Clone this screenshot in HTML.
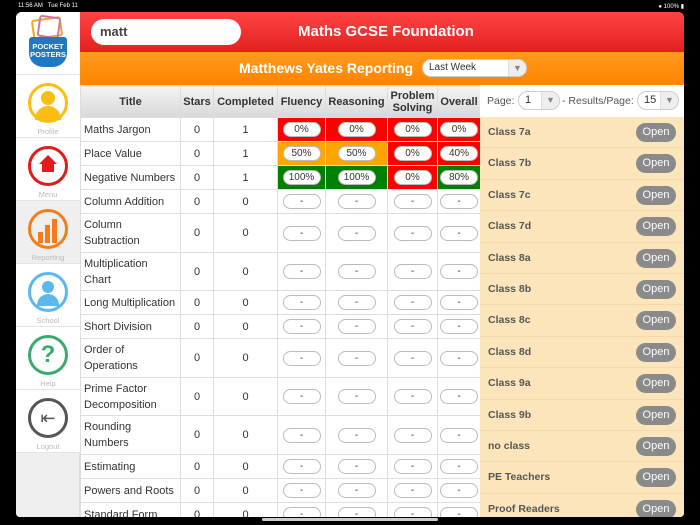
<!DOCTYPE html>
<html><head><style>
*{box-sizing:border-box;margin:0;padding:0}
body{width:700px;height:525px;background:#000;font-family:"Liberation Sans",sans-serif;position:relative;overflow:hidden}
.abs{position:absolute}
.status{color:#fff;font-size:6px;top:3px}
#app{left:16px;top:12px;width:668px;height:505px;background:#fff;border-radius:6px 6px 4px 4px;overflow:hidden}
#side{left:0;top:0;width:64px;height:505px;background:#efefef;border-right:1px solid #ddd}
.nav{position:absolute;left:0;width:64px;height:63px;background:#fff;border-bottom:1px solid #e4e4e4;text-align:center;font-size:7.5px;color:#bbb}
.nav .ic{position:absolute;left:12px;top:8px;width:40px;height:40px;border-radius:50%;border:3px solid}
.nav span{position:absolute;left:0;right:0;top:52px}
#red{left:64px;top:0;width:604px;height:40px;background:linear-gradient(#f44,#e42020)}
#org{left:64px;top:40px;width:604px;height:33px;background:linear-gradient(#ff9a1e,#ff8400)}
table{border-collapse:collapse;position:absolute;left:64px;top:73px;font-size:11px;color:#333}
td,th{border:1px solid #ddd;text-align:center;padding:0}
th{background:linear-gradient(#f4f4f4,#d8d8d8);height:32px;font-size:11px;color:#333;line-height:12px}
td.t{text-align:left;padding-left:3px;line-height:16px}
.p{display:inline-block;width:38px;height:15px;border-radius:8px;background:#fff;border:1px solid #bbb;font-size:10px;line-height:13px;color:#333}
.R{background:#f00}.O{background:#ffa500}.G{background:#008000}
#right{left:464px;top:73px;width:204px;height:432px;background:#fde5bb}
.cl{position:absolute;left:0;width:204px;height:31.4px;border-bottom:1px solid #f4d9aa;font-size:10.5px;font-weight:bold;color:#555;padding-left:8px;line-height:31px}
.cl b{position:absolute;right:8px;top:6px;width:40px;height:19px;border-radius:10px;background:#8a8a8a;color:#fff;font-weight:normal;text-align:center;line-height:19px;font-size:11px}
.sel{position:absolute;height:19px;border-radius:10px;background:#fff;border:1px solid #ccc;font-size:11px;color:#333;line-height:17px;padding-left:6px}
.sel i{position:absolute;right:0;top:0;width:18px;height:17px;border-left:1px solid #ddd;color:#888;font-style:normal;font-size:9px;text-align:center;border-radius:0 10px 10px 0;background:#eee}
</style></head><body>
<div class="abs status" style="left:18px">11:56 AM&nbsp;&nbsp; Tue Feb 11</div>
<div class="abs status" style="right:16px">&#9679; 100% ▮</div>
<div id="app" class="abs">
<div id="side" class="abs">
 <div class="nav" style="top:0">
  <div class="abs" style="left:16px;top:6px;width:30px;height:20px;border:2px solid #f5a623;border-radius:3px;transform:rotate(-8deg)"></div>
  <div class="abs" style="left:22px;top:4px;width:22px;height:22px;border:2px solid #c7a;border-radius:3px;transform:rotate(8deg)"></div>
  <div class="abs" style="left:13px;top:25px;width:38px;height:30px;background:#1e78c2;border-radius:3px 3px 14px 14px;color:#fff;font-weight:bold;font-size:7.5px;line-height:8px;padding-top:6px">POCKET<br>POSTERS</div>
 </div>
 <div class="nav" style="top:63px"><div class="ic" style="border-color:#fbbd12"><div class="abs" style="left:10px;top:5px;width:14px;height:14px;border-radius:50%;background:#fbbd12"></div><div class="abs" style="left:4px;top:20px;width:26px;height:14px;border-radius:13px 13px 0 0;background:#fbbd12"></div></div><span>Profile</span></div>
 <div class="nav" style="top:126px"><div class="ic" style="border-color:#e21a1a"><div class="abs" style="left:8px;top:6px;width:0;height:0;border-left:9px solid transparent;border-right:9px solid transparent;border-bottom:9px solid #e21a1a"></div><div class="abs" style="left:11px;top:14px;width:12px;height:9px;background:#e21a1a"></div></div><span>Menu</span></div>
 <div class="nav" style="top:189px;background:#efefef"><div class="ic" style="border-color:#f47d1b"><div class="abs" style="left:7px;top:20px;width:5px;height:11px;background:#f47d1b"></div><div class="abs" style="left:14px;top:13px;width:5px;height:18px;background:#f47d1b"></div><div class="abs" style="left:21px;top:7px;width:5px;height:24px;background:#f47d1b"></div></div><span>Reporting</span></div>
 <div class="nav" style="top:252px"><div class="ic" style="border-color:#5bb8ea"><div class="abs" style="left:11px;top:6px;width:12px;height:12px;border-radius:50%;background:#5bb8ea"></div><div class="abs" style="left:6px;top:19px;width:22px;height:12px;border-radius:11px 11px 0 0;background:#5bb8ea"></div></div><span>School</span></div>
 <div class="nav" style="top:315px"><div class="ic" style="border-color:#3aaa6e;color:#3aaa6e;font-weight:bold;font-size:24px;line-height:34px">?</div><span>Help</span></div>
 <div class="nav" style="top:378px"><div class="ic" style="border-color:#555;color:#555;font-size:18px;line-height:34px">&#8676;</div><span>Logout</span></div>
</div>
<div id="red" class="abs"><div class="abs" style="left:11px;top:7px;width:150px;height:26px;background:#fff;border-radius:13px;font-size:13px;font-weight:bold;color:#444;padding-left:9px;line-height:26px">matt</div>
<div class="abs" style="left:218px;top:11px;color:#fff;font-weight:bold;font-size:15px">Maths GCSE Foundation</div></div>
<div id="org" class="abs"><div class="abs" style="left:159px;top:8px;color:#fff;font-weight:bold;font-size:14px">Matthews Yates Reporting</div>
<div class="sel" style="left:342px;top:7px;width:105px;height:18px;font-size:10px;line-height:16px">Last Week<i style="height:16px">▼</i></div></div>
<table>
<tr><th style="width:100px">Title</th><th style="width:33px">Stars</th><th style="width:64px">Completed</th><th style="width:48px">Fluency</th><th style="width:62px">Reasoning</th><th style="width:50px">Problem<br>Solving</th><th style="width:43px">Overall</th></tr>
<tr style="height:24px"><td class="t">Maths Jargon</td><td>0</td><td>1</td><td class="R"><span class="p">0%</span></td><td class="R"><span class="p">0%</span></td><td class="R"><span class="p">0%</span></td><td class="R"><span class="p">0%</span></td></tr>
<tr style="height:24px"><td class="t">Place Value</td><td>0</td><td>1</td><td class="O"><span class="p">50%</span></td><td class="O"><span class="p">50%</span></td><td class="R"><span class="p">0%</span></td><td class="R"><span class="p">40%</span></td></tr>
<tr style="height:24px"><td class="t">Negative Numbers</td><td>0</td><td>1</td><td class="G"><span class="p">100%</span></td><td class="G"><span class="p">100%</span></td><td class="R"><span class="p">0%</span></td><td class="G"><span class="p">80%</span></td></tr>
<tr style="height:24px"><td class="t">Column Addition</td><td>0</td><td>0</td><td><span class="p">-</span></td><td><span class="p">-</span></td><td><span class="p">-</span></td><td><span class="p">-</span></td></tr>
<tr style="height:39px"><td class="t">Column<br>Subtraction</td><td>0</td><td>0</td><td><span class="p">-</span></td><td><span class="p">-</span></td><td><span class="p">-</span></td><td><span class="p">-</span></td></tr>
<tr style="height:38px"><td class="t">Multiplication<br>Chart</td><td>0</td><td>0</td><td><span class="p">-</span></td><td><span class="p">-</span></td><td><span class="p">-</span></td><td><span class="p">-</span></td></tr>
<tr style="height:24px"><td class="t">Long Multiplication</td><td>0</td><td>0</td><td><span class="p">-</span></td><td><span class="p">-</span></td><td><span class="p">-</span></td><td><span class="p">-</span></td></tr>
<tr style="height:24px"><td class="t">Short Division</td><td>0</td><td>0</td><td><span class="p">-</span></td><td><span class="p">-</span></td><td><span class="p">-</span></td><td><span class="p">-</span></td></tr>
<tr style="height:39px"><td class="t">Order of<br>Operations</td><td>0</td><td>0</td><td><span class="p">-</span></td><td><span class="p">-</span></td><td><span class="p">-</span></td><td><span class="p">-</span></td></tr>
<tr style="height:38px"><td class="t">Prime Factor<br>Decomposition</td><td>0</td><td>0</td><td><span class="p">-</span></td><td><span class="p">-</span></td><td><span class="p">-</span></td><td><span class="p">-</span></td></tr>
<tr style="height:39px"><td class="t">Rounding<br>Numbers</td><td>0</td><td>0</td><td><span class="p">-</span></td><td><span class="p">-</span></td><td><span class="p">-</span></td><td><span class="p">-</span></td></tr>
<tr style="height:24px"><td class="t">Estimating</td><td>0</td><td>0</td><td><span class="p">-</span></td><td><span class="p">-</span></td><td><span class="p">-</span></td><td><span class="p">-</span></td></tr>
<tr style="height:24px"><td class="t">Powers and Roots</td><td>0</td><td>0</td><td><span class="p">-</span></td><td><span class="p">-</span></td><td><span class="p">-</span></td><td><span class="p">-</span></td></tr>
<tr style="height:24px"><td class="t">Standard Form</td><td>0</td><td>0</td><td><span class="p">-</span></td><td><span class="p">-</span></td><td><span class="p">-</span></td><td><span class="p">-</span></td></tr>
</table>
<div id="right" class="abs">
 <div class="abs" style="left:0;top:0;width:204px;height:32px;background:#fff;font-size:10.5px;color:#555;line-height:32px">
  <span class="abs" style="left:7px;top:0">Page:</span>
  <span class="abs" style="left:82px;top:0">- Results/Page:</span>
 </div>
 <div class="sel" style="left:38px;top:6px;width:42px">1<i>▼</i></div>
 <div class="sel" style="left:157px;top:6px;width:42px">15<i>▼</i></div>
 <div class="cl" style="top:32px">Class 7a<b>Open</b></div>
 <div class="cl" style="top:63.4px">Class 7b<b>Open</b></div>
 <div class="cl" style="top:94.8px">Class 7c<b>Open</b></div>
 <div class="cl" style="top:126.2px">Class 7d<b>Open</b></div>
 <div class="cl" style="top:157.6px">Class 8a<b>Open</b></div>
 <div class="cl" style="top:189px">Class 8b<b>Open</b></div>
 <div class="cl" style="top:220.4px">Class 8c<b>Open</b></div>
 <div class="cl" style="top:251.8px">Class 8d<b>Open</b></div>
 <div class="cl" style="top:283.2px">Class 9a<b>Open</b></div>
 <div class="cl" style="top:314.6px">Class 9b<b>Open</b></div>
 <div class="cl" style="top:346px">no class<b>Open</b></div>
 <div class="cl" style="top:377.4px">PE Teachers<b>Open</b></div>
 <div class="cl" style="top:408.8px">Proof Readers<b>Open</b></div>
</div>
</div>
<div class="abs" style="left:262px;top:518px;width:176px;height:3px;border-radius:2px;background:#ccc"></div>
</body></html>
